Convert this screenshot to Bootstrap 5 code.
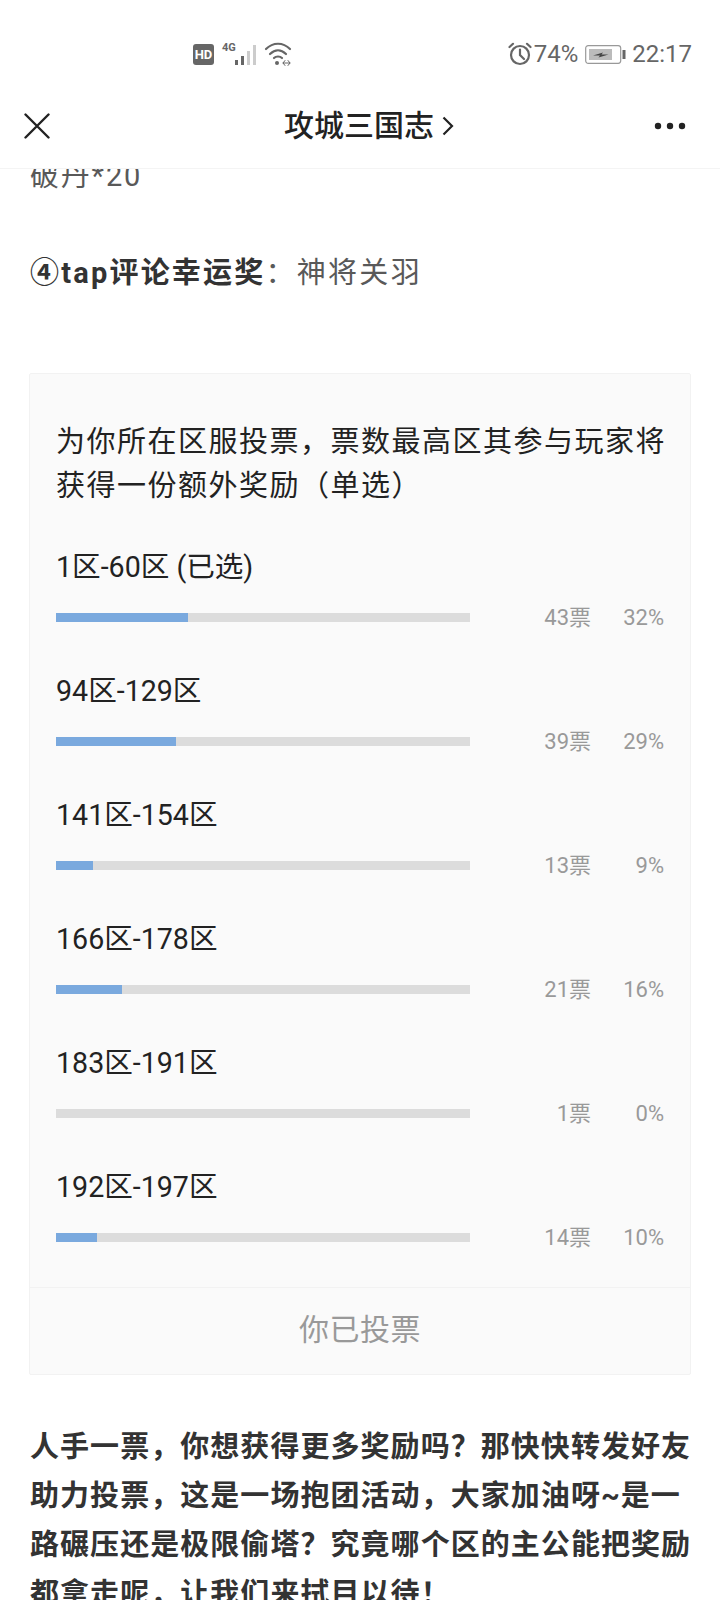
<!DOCTYPE html>
<html lang="zh-CN">
<head>
  <meta charset="UTF-8">
  <title>攻城三国志</title>
  <meta name="viewport" content="width=device-width, initial-scale=1">
  <link href="https://cdn.jsdelivr.net/npm/bootstrap@5.3.2/dist/css/bootstrap.min.css" rel="stylesheet">
  <style>
    html, body { height: 1600px; overflow: hidden; }
    body {
      font-family: Roboto, "Noto Sans CJK SC", sans-serif;
      background-color: #fff;
      color: #333;
    }
    .page-top {
      position: absolute;
      top: 0; left: 0; right: 0;
      z-index: 2;
      background-color: #fff;
      border-bottom: 1px solid #f4f4f4;
    }
    .status-row { height: 84px; padding: 24px 28px 0 193px; color: #666; font-size: 24px; }
    .net-type { font-size: 11px; font-weight: 700; line-height: 1; color: #666; margin: -14px -2px 0 8px; }
    .alarm-gap { margin-left: 2px; }
    .batt-icon { margin: 0 6px 0 7px; }
    .nav-row { height: 84px; padding: 0 34px 0 24px; color: #222; }
    .nav-title { font-size: 30px; font-weight: 500; line-height: 1; margin-left: 34px; }
    .article {
      padding: 152px 28px 0 30px;
      font-size: 29px;
      line-height: 49px;
      letter-spacing: 1.8px;
      color: #595959;
    }
    .article p { margin: 0 0 48px 0; }
    .article b { color: #333; font-weight: 700; }
    .prize-line { letter-spacing: 2.3px; }
    .prize-line b { letter-spacing: 2.2px; }
    .closing { letter-spacing: 1.05px; margin-right: -8px !important; }
    .vote-box {
      margin: 75px 1px 48px -1px;
      background-color: #fafafa;
      border: 1px solid #f2f2f2;
      border-radius: 2px;
      color: #222;
    }
    .vote-body { padding: 46px 8px 45px 26px; }
    .vote-question { line-height: 44px; margin-bottom: 39px; letter-spacing: 1.5px; }
    .vote-label { font-size: 28.6px; line-height: 40px; letter-spacing: 0; margin-bottom: 26px; }
    .vote-item { margin-bottom: 49px; }
    .vote-item:last-child { margin-bottom: 0; }
    .vote-track { width: 414px; height: 9px; background-color: #dcdcdc; flex-shrink: 0; }
    .vote-fill { height: 100%; background-color: #7aa9de; }
    .vote-num {
      font-size: 22px;
      line-height: 9px;
      letter-spacing: 0;
      color: #999;
      text-align: right;
    }
    .vote-count { width: 121px; }
    .vote-pct { width: 73px; }
    .vote-foot {
      height: 87px;
      padding-bottom: 4px;
      border-top: 1px solid #f2f2f2;
      color: #999;
      font-size: 30px;
      letter-spacing: 0.5px;
    }
  </style>
</head>
<body>
  <!-- status bar + title bar sit over the scrolled article -->
  <div class="page-top">
    <div class="status-row d-flex align-items-center justify-content-between">
      <div class="d-flex align-items-center">
        <svg width="21" height="21" viewBox="0 0 21 21">
          <rect width="21" height="21" rx="3" fill="#666"/>
          <text x="10.5" y="15" font-size="13" font-weight="700" text-anchor="middle" fill="#fff" font-family="Roboto">HD</text>
        </svg>
        <span class="net-type">4G</span>
        <svg width="26" height="24" viewBox="0 0 26 24">
          <rect x="1" y="18" width="3" height="5" fill="#666"/>
          <rect x="7" y="14" width="3" height="9" fill="#666"/>
          <rect x="13" y="9" width="3" height="14" fill="#ccc"/>
          <rect x="19" y="3" width="3" height="20" fill="#ccc"/>
        </svg>
        <svg class="ms-1" width="28" height="24" viewBox="0 0 28 24" fill="none" stroke="#666" stroke-width="2.2" stroke-linecap="round">
          <path d="M2 7C9 0 19 0 26 7"/>
          <path d="M6 12C11 7 17 7 22 12"/>
          <path d="M10 16C12 14 16 14 18 16"/>
          <circle cx="13" cy="21" r="2" fill="#666" stroke="none"/>
          <path d="M19 21h7M21 18.500l-2 2.500 2 2.500M24 18.500l2 2.500-2 2.500" stroke-width="1"/>
        </svg>
      </div>
      <div class="d-flex align-items-center">
        <svg width="24" height="24" viewBox="0 0 24 24" fill="none" stroke="#666" stroke-width="2.2" stroke-linecap="round">
          <circle cx="12" cy="13" r="9"/>
          <path d="M12 7.500V13l4 4M1.500 5L5 1.800M22.500 5L19 1.800"/>
        </svg>
        <span class="alarm-gap">74%</span>
        <svg class="batt-icon" width="41" height="19" viewBox="0 0 41 19">
          <rect x="0.7" y="0.7" width="35" height="17.600" rx="2.500" fill="none" stroke="#999" stroke-width="1.200"/>
          <rect x="4" y="4" width="23" height="11" fill="#bbb"/>
          <rect x="37.500" y="5" width="3" height="9" fill="#666"/>
          <path d="M8 10.500l10-3-1.500 2h7l-10 3 1.500-2z" fill="#444"/>
        </svg>
        <span>22:17</span>
      </div>
    </div>
    <div class="nav-row d-flex align-items-center justify-content-between">
      <svg width="26" height="26" viewBox="0 0 26 26" fill="none" stroke="#222" stroke-width="2.400" stroke-linecap="round">
        <path d="M1.500 1.500l23 23M24.500 1.500l-23 23"/>
      </svg>
      <div class="nav-title d-flex align-items-center">
        攻城三国志
        <svg class="ms-2" width="12" height="20" viewBox="0 0 12 20" fill="none" stroke="#222" stroke-width="2.200">
          <path d="M1.500 1.500L10 10l-8.500 8.500"/>
        </svg>
      </div>
      <svg width="32" height="8" viewBox="0 0 32 8" fill="#222">
        <circle cx="4" cy="4" r="3.200"/>
        <circle cx="16" cy="4" r="3.200"/>
        <circle cx="28" cy="4" r="3.200"/>
      </svg>
    </div>
  </div>

  <div class="article">
    <p>破丹*20</p>
    <p class="prize-line"><b>④tap评论幸运奖</b>：神将关羽</p>

    <div class="vote-box">
      <div class="vote-body">
        <div class="vote-question">为你所在区服投票，票数最高区其参与玩家将获得一份额外奖励（单选）</div>
        <div id="vote-list"></div>
      </div>
      <div class="vote-foot d-flex align-items-center justify-content-center">你已投票</div>
    </div>

    <p class="closing"><b>人手一票，你想获得更多奖励吗？那快快转发好友助力投票，这是一场抱团活动，大家加油呀~是一路碾压还是极限偷塔？究竟哪个区的主公能把奖励都拿走呢，让我们来拭目以待！</b></p>
  </div>

  <script src="https://cdn.jsdelivr.net/npm/bootstrap@5.3.2/dist/js/bootstrap.bundle.min.js"></script>
  <script>
    const OPTIONS = [
      { name: "1区-60区 (已选)", votes: 43, pct: 32 },
      { name: "94区-129区", votes: 39, pct: 29 },
      { name: "141区-154区", votes: 13, pct: 9 },
      { name: "166区-178区", votes: 21, pct: 16 },
      { name: "183区-191区", votes: 1, pct: 0 },
      { name: "192区-197区", votes: 14, pct: 10 }
    ];

    const list = document.getElementById("vote-list");
    OPTIONS.forEach(opt => {
      const row = document.createElement("div");
      row.className = "vote-item";
      row.innerHTML = `
        <div class="vote-label">${opt.name}</div>
        <div class="d-flex align-items-center">
          <div class="vote-track"><div class="vote-fill" style="width: ${opt.pct}%"></div></div>
          <div class="vote-num vote-count">${opt.votes}票</div>
          <div class="vote-num vote-pct">${opt.pct}%</div>
        </div>
      `;
      list.appendChild(row);
    });
  </script>
</body>
</html>
